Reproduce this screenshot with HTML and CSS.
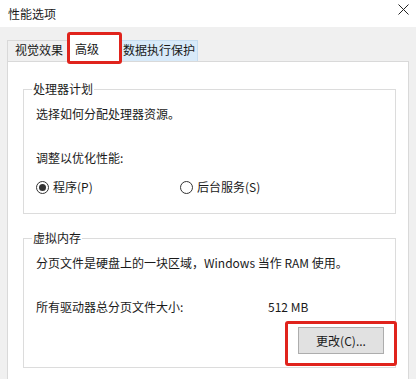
FILE: index.html
```html
<!DOCTYPE html>
<html lang="zh-CN">
<head>
    <meta charset="UTF-8">
    <title>性能选项</title>
    <link rel="stylesheet" href="styles.css">
</head>
<body>
    <div class="window">
        <div class="titlebar">
            <span class="title">性能选项</span>
            <svg class="close" width="11" height="11" viewBox="0 0 11 11">
                <path d="M0.5 0.5 L10.5 10.5 M10.5 0.5 L0.5 10.5" stroke="#222" stroke-width="1" fill="none"/>
            </svg>
        </div>

        <div class="tabs">
            <div class="tab">视觉效果</div>
            <div class="tab active">高级<span class="mark mark-tab"></span></div>
            <div class="tab hover">数据执行保护</div>
        </div>

        <div class="panel">
            <fieldset class="group group-cpu">
                <legend>处理器计划</legend>
                <div class="line first">选择如何分配处理器资源。</div>
                <div class="line gap">调整以优化性能:</div>
                <div class="radios">
                    <label class="radio">
                        <span class="dot checked"></span>程序(P)
                    </label>
                    <label class="radio">
                        <span class="dot"></span>后台服务(S)
                    </label>
                </div>
            </fieldset>

            <fieldset class="group group-mem">
                <legend>虚拟内存</legend>
                <div class="line first">分页文件是硬盘上的一块区域，Windows 当作 RAM 使用。</div>
                <div class="line gap size-row">
                    <span class="size-label">所有驱动器总分页文件大小:</span>
                    <span>512 MB</span>
                </div>
                <div class="actions">
                    <button class="btn">更改(C)...<span class="mark mark-btn"></span></button>
                </div>
            </fieldset>
        </div>
    </div>
</body>
</html>
```

FILE: styles.css
```css
* {
    box-sizing: border-box;
}

body {
    margin: 0;
    padding: 0;
    background: #f0f0f0;
    font-family: "Segoe UI", "Noto Sans CJK SC", "Noto Sans", sans-serif;
    font-size: 12px;
    color: #1a1a1a;
}

.window {
    width: 416px;
    height: 379px;
    overflow: hidden;
    background: #f0f0f0;
}

.titlebar {
    height: 27px;
    background: #fff;
    display: flex;
    align-items: center;
    justify-content: space-between;
    padding: 0 7px 2px 8px;
}

.title {
    line-height: 16px;
    padding-top: 2px;
}

.close {
    margin-bottom: 6px;
}

.tabs {
    display: flex;
    align-items: flex-end;
    height: 34px;
    padding-left: 7px;
    padding-top: 6px;
}

.tab {
    position: relative;
    height: 21px;
    line-height: 17px;
    padding: 0 4px 0 7px;
    border: 1px solid #d9d9d9;
    border-bottom: none;
    background: #f0f0f0;
    white-space: nowrap;
}

.tab.active {
    height: 28px;
    line-height: 16px;
    background: #fff;
    padding: 6px 20px 0 6px;
    margin-bottom: -1px;
    border-bottom: none;
    z-index: 1;
}

.tab.hover {
    background: #d8eaf9;
    border-color: #c5dcf0;
    padding: 0 2px;
}

.mark {
    position: absolute;
    border: 3px solid #e0231c;
    border-radius: 3px;
    pointer-events: none;
}

.mark-tab {
    left: -2px;
    top: -3px;
    width: 55px;
    height: 32px;
}

.panel {
    margin-left: 7px;
    width: 402px;
    height: 330px;
    background: #fff;
    border: 1px solid #d9d9d9;
    padding: 19px 12px 0 15px;
}

.group {
    margin: 0;
    border: 1px solid #dcdcdc;
    padding: 0 12px;
    min-width: 0;
}

.group legend {
    padding: 0 1px;
    margin-left: -4px;
    line-height: 16px;
}

.group-cpu {
    padding-bottom: 18px;
}

.group-mem {
    margin-top: 16px;
    padding-bottom: 13px;
}

.line {
    line-height: 16px;
}

.line.first {
    margin-top: 9px;
}

.line.gap {
    margin-top: 28px;
}

.radios {
    display: flex;
    margin-top: 13px;
    line-height: 16px;
}

.radio {
    display: flex;
    align-items: center;
    gap: 4px;
    width: 144px;
}

.dot {
    width: 13px;
    height: 13px;
    border: 1px solid #333;
    border-radius: 50%;
    display: flex;
    align-items: center;
    justify-content: center;
}

.dot.checked::after {
    content: "";
    width: 7px;
    height: 7px;
    border-radius: 50%;
    background: #333;
}

.size-row {
    display: flex;
}

.size-label {
    width: 232px;
}

.actions {
    display: flex;
    justify-content: flex-end;
    margin-top: 12px;
    margin-right: -1px;
}

.btn {
    position: relative;
    width: 86px;
    height: 27px;
    background: #e1e1e1;
    border: 1px solid #adadad;
    font-family: inherit;
    font-size: 12px;
    color: #1a1a1a;
    padding: 0;
}

.mark-btn {
    left: -14px;
    top: -7px;
    width: 112px;
    height: 45px;
}
```
